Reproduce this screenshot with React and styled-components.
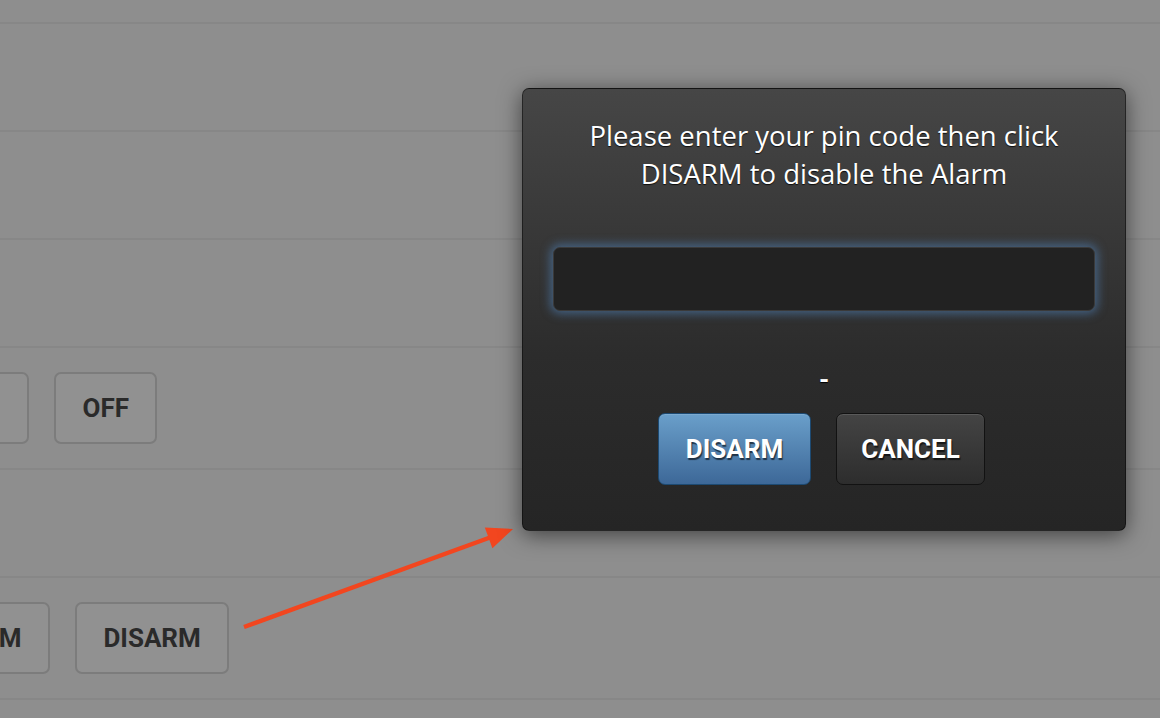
import React from "react";
import styled, { createGlobalStyle } from "styled-components";

const GlobalStyle = createGlobalStyle`
  html, body {
    margin: 0;
    padding: 0;
    background: #8e8e8e;
  }
  body {
    font-family: Roboto, "Liberation Sans", sans-serif;
    overflow: hidden;
  }
`;

const Page = styled.div`
  position: relative;
  width: 1160px;
  height: 718px;
  overflow: hidden;
  background: #8e8e8e;
`;

const List = styled.div`
  display: flex;
  flex-direction: column;
`;

const Row = styled.div`
  height: ${props => props.h}px;
  border-bottom: 2px solid #878787;
  display: flex;
  align-items: center;
  box-sizing: border-box;
`;

const Controls = styled.div`
  display: flex;
  gap: 25px;
  margin-left: ${props => props.offset}px;
`;

const PageButton = styled.div`
  height: 72px;
  box-sizing: border-box;
  padding: 0 26.5px;
  display: flex;
  align-items: center;
  justify-content: center;
  border: 2px solid #7c7c7c;
  border-radius: 7px;
  background: #919191;
  color: #2a2a2a;
  font-weight: 700;
  font-size: 26px;
  white-space: nowrap;
  min-width: 103px;
`;

const Dialog = styled.div`
  position: absolute;
  left: 522px;
  top: 88px;
  width: 604px;
  height: 443px;
  box-sizing: border-box;
  border-radius: 7px;
  border: 1px solid rgba(0, 0, 0, 0.45);
  background: linear-gradient(to bottom, #464646 0%, #2c2c2c 60%, #252525 100%);
  box-shadow: 0 4px 22px rgba(0, 0, 0, 0.55);
  display: flex;
  flex-direction: column;
  align-items: center;
  padding: 28px 20px 43px;
`;

const Message = styled.div`
  color: #ffffff;
  font-family: "Open Sans", Roboto, sans-serif;
  font-size: 27.5px;
  line-height: 38px;
  text-align: center;
  text-shadow: 0 1px 1px rgba(0, 0, 0, 0.8);
  width: 560px;
  white-space: nowrap;
`;

const PinInput = styled.div`
  margin-top: 54px;
  width: 542px;
  height: 64px;
  box-sizing: border-box;
  background: #222222;
  border: 1px solid #3a3a3a;
  border-radius: 7px;
  box-shadow: 0 0 10px 3px rgba(78, 126, 180, 0.6);
`;

const Status = styled.div`
  margin-top: 56px;
  color: #ffffff;
  font-size: 26px;
  font-weight: 700;
  line-height: 26px;
  text-shadow: 0 1px 1px #000;
`;

const Actions = styled.div`
  margin-top: 20px;
  margin-right: 5px;
  display: flex;
  gap: 25px;
`;

const DialogButton = styled.div`
  height: 72px;
  box-sizing: border-box;
  padding: 0 20px;
  display: flex;
  align-items: center;
  justify-content: center;
  border-radius: 7px;
  font-weight: 700;
  font-size: 26px;
  color: #ffffff;
  text-shadow: 1px 2px 1px rgba(0, 0, 0, 0.6);
  border: 1px solid ${props => (props.primary ? "#1d4a72" : "#121212")};
  background: ${props =>
    props.primary
      ? "linear-gradient(to bottom, #6a9fca 0%, #3d6898 100%)"
      : "linear-gradient(to bottom, #444444 0%, #2d2d2d 100%)"};
  box-shadow: inset 0 1px 0 rgba(255, 255, 255, 0.12);
  width: ${props => (props.primary ? 153 : 149)}px;
`;

const ArrowLayer = styled.svg`
  position: absolute;
  left: 0;
  top: 0;
  pointer-events: none;
`;

export default function App() {
  return (
    <Page>
      <GlobalStyle />
      <List>
        <Row h={24} />
        <Row h={108} />
        <Row h={108} />
        <Row h={108} />
        <Row h={122}>
          <Controls offset={-74}>
            <PageButton>ON</PageButton>
            <PageButton>OFF</PageButton>
          </Controls>
        </Row>
        <Row h={108} />
        <Row h={122}>
          <Controls offset={-64}>
            <PageButton>ARM</PageButton>
            <PageButton>DISARM</PageButton>
          </Controls>
        </Row>
        <Row h={40} />
      </List>

      <ArrowLayer width="1160" height="718" viewBox="0 0 1160 718">
        <line x1="244" y1="627" x2="490" y2="537.5" stroke="#f2461f" strokeWidth="4.5" />
        <polygon points="513,529 484.8,527.6 492.4,548.2" fill="#f2461f" />
      </ArrowLayer>

      <Dialog>
        <Message>
          Please enter your pin code then click
          <br />
          DISARM to disable the Alarm
        </Message>
        <PinInput />
        <Status>-</Status>
        <Actions>
          <DialogButton primary>DISARM</DialogButton>
          <DialogButton>CANCEL</DialogButton>
        </Actions>
      </Dialog>
    </Page>
  );
}
